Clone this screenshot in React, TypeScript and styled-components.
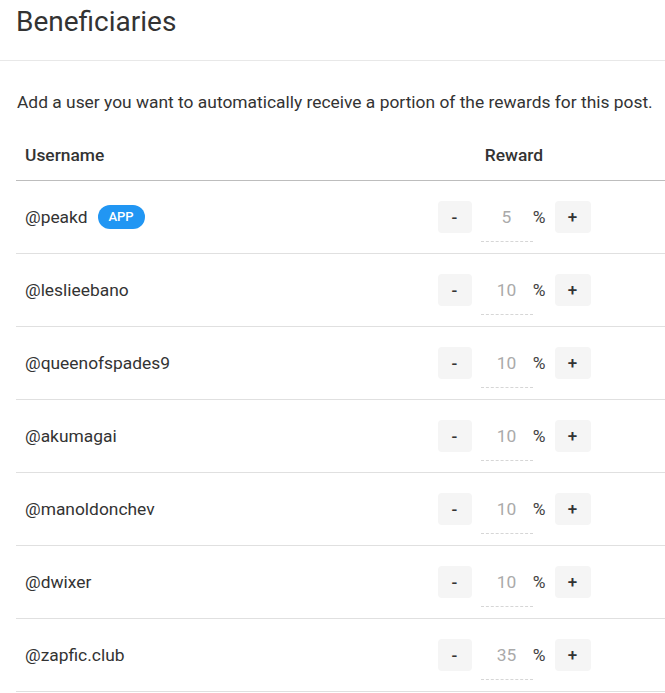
import styled, { createGlobalStyle } from 'styled-components';

const GlobalStyle = createGlobalStyle`
  body {
    margin: 0;
    background: #fff;
    font-family: Roboto, "Liberation Sans", sans-serif;
    color: #333;
  }
`;

const Page = styled.div`
  width: 665px;
  overflow: hidden;
`;

const Header = styled.div`
  height: 61px;
  box-sizing: border-box;
  padding: 6px 16px 0;
  border-bottom: 1px solid #e8e8e8;
`;

const Title = styled.h1`
  margin: 0;
  font-size: 28px;
  line-height: 32px;
  font-weight: 400;
  color: #333;
`;

const Body = styled.div`
  padding-left: 16px;
`;

const Description = styled.p`
  margin: 28px 0 0 1px;
  font-size: 17.4px;
  line-height: 26px;
  color: #333;
  white-space: nowrap;
`;

const Row = styled.div<{ $head?: boolean }>`
  display: grid;
  grid-template-columns: 1fr 302px;
  align-items: center;
  box-sizing: border-box;
  width: 649px;
  min-height: ${(p) => (p.$head ? '0' : '73px')};
  padding: ${(p) => (p.$head ? '28px 0 13px' : '0')};
  border-bottom: 1px solid ${(p) => (p.$head ? '#bdbdbd' : '#e0e0e0')};
`;

const HeadCell = styled.div<{ $center?: boolean }>`
  padding-left: ${(p) => (p.$center ? '0' : '9px')};
  font-size: 17.4px;
  line-height: 24px;
  font-weight: 500;
  color: #333;
  text-align: ${(p) => (p.$center ? 'center' : 'left')};
`;

const UserCell = styled.div`
  display: flex;
  align-items: center;
  padding-left: 9px;
  font-size: 17.4px;
  line-height: 24px;
  color: #333;
`;

const Badge = styled.span`
  display: inline-flex;
  align-items: center;
  justify-content: center;
  margin-left: 10px;
  width: 47px;
  height: 24px;
  border-radius: 12px;
  background: #2196f3;
  color: #fff;
  font-size: 13px;
  font-weight: 500;
`;

const Reward = styled.div`
  display: flex;
  align-items: center;
  justify-content: center;
`;

const StepButton = styled.button<{ $w: number }>`
  width: ${(p) => p.$w}px;
  height: 32px;
  padding: 0;
  border: none;
  border-radius: 4px;
  background: #f5f5f5;
  color: #333;
  font-family: inherit;
  font-size: 17px;
  font-weight: 500;
  line-height: 32px;
`;

const Amount = styled.input`
  box-sizing: border-box;
  width: 52px;
  height: 44px;
  margin: 6px 0 0 9px;
  padding: 0 0 6px;
  border: none;
  border-bottom: 1px dashed #d6d6d6;
  background: transparent;
  font-family: inherit;
  font-size: 17.4px;
  color: #aaa;
  text-align: center;
  outline: none;
`;

const Percent = styled.span`
  width: 13px;
  margin-right: 9px;
  text-align: center;
  font-size: 17.4px;
  color: #444;
`;

const beneficiaries = [
  { user: 'peakd', weight: 5, app: true },
  { user: 'leslieebano', weight: 10 },
  { user: 'queenofspades9', weight: 10 },
  { user: 'akumagai', weight: 10 },
  { user: 'manoldonchev', weight: 10 },
  { user: 'dwixer', weight: 10 },
  { user: 'zapfic.club', weight: 35 },
];

export default function App() {
  return (
    <>
      <GlobalStyle />
      <Page>
        <Header>
          <Title>Beneficiaries</Title>
        </Header>
        <Body>
          <Description>
            Add a user you want to automatically receive a portion of the rewards for this post.
          </Description>
          <Row $head>
            <HeadCell>Username</HeadCell>
            <HeadCell $center>Reward</HeadCell>
          </Row>
          {beneficiaries.map((b) => (
            <Row key={b.user}>
              <UserCell>
                @{b.user}
                {b.app && <Badge>APP</Badge>}
              </UserCell>
              <Reward>
                <StepButton $w={34}>-</StepButton>
                <Amount value={b.weight} readOnly />
                <Percent>%</Percent>
                <StepButton $w={36}>+</StepButton>
              </Reward>
            </Row>
          ))}
        </Body>
      </Page>
    </>
  );
}
